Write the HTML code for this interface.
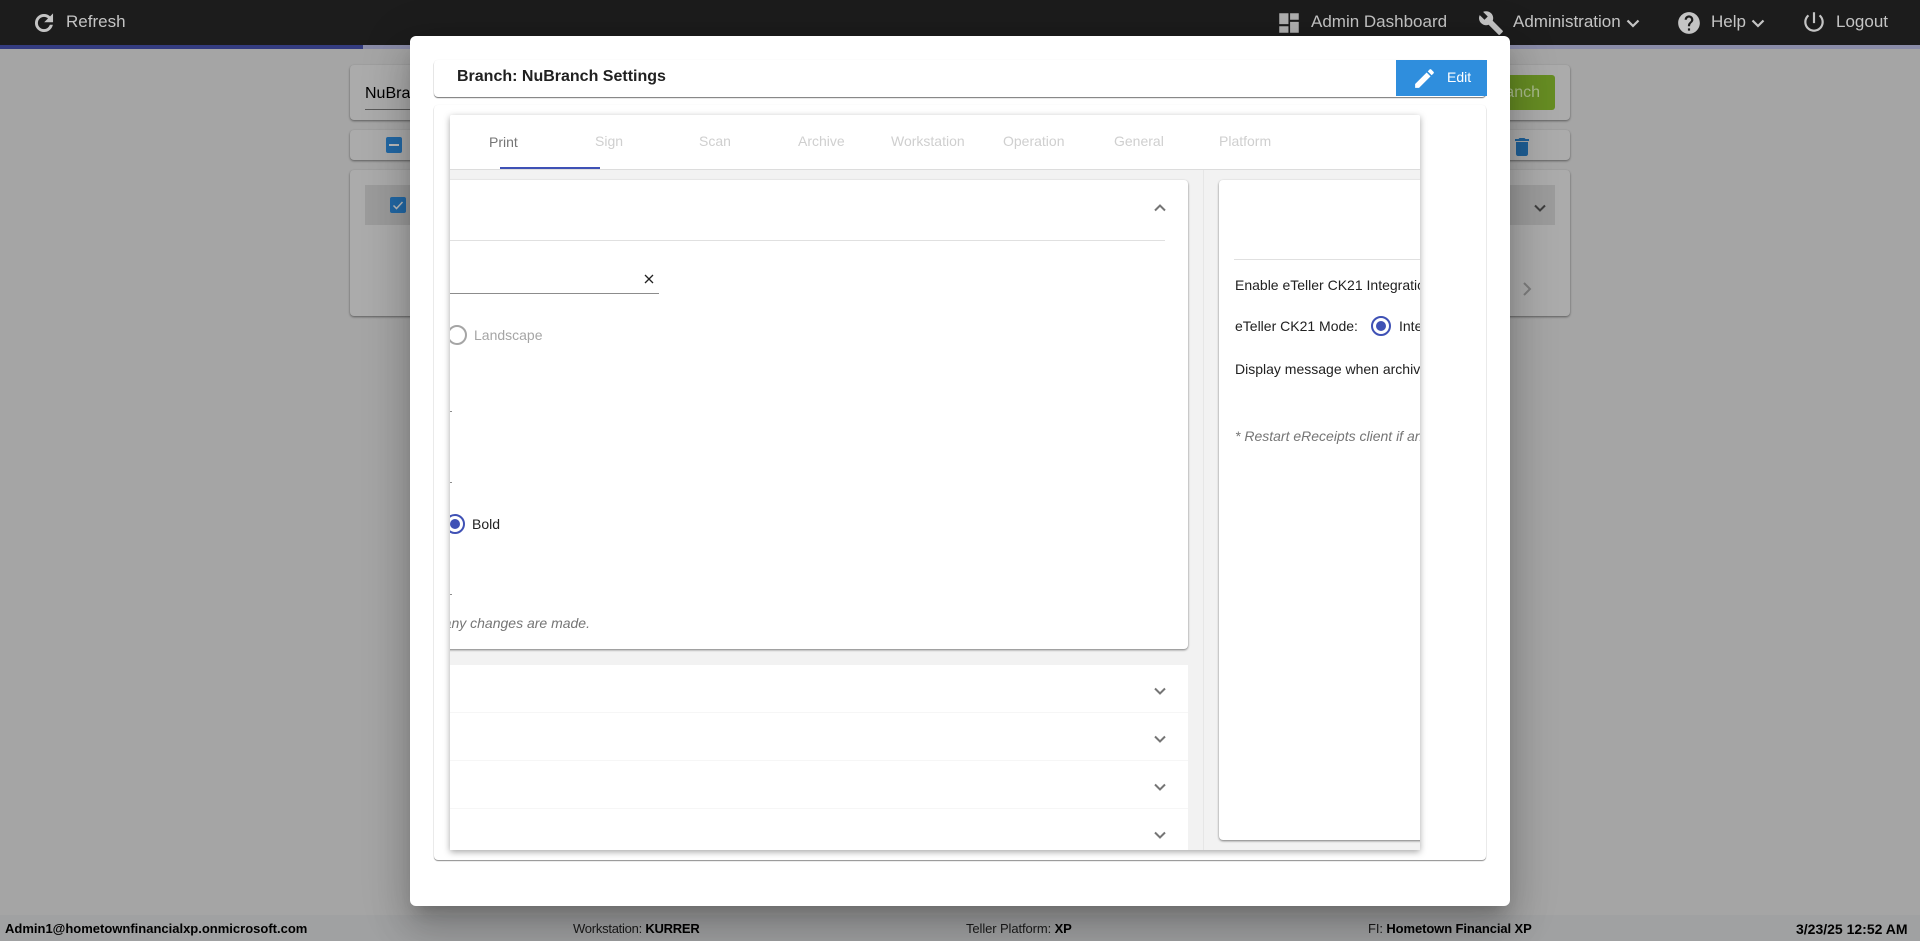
<!DOCTYPE html>
<html><head><meta charset="utf-8"><title>Branch Settings</title>
<style>
*{box-sizing:border-box}
html,body{margin:0;padding:0;width:1920px;height:941px;overflow:hidden;background:#a5a5a5;font-family:"Liberation Sans",Arial,sans-serif}
.a{position:absolute}
.t{position:absolute;white-space:nowrap;line-height:20px}
svg{position:absolute;display:block}
.nav{color:#c4c4c4;font-size:17px;top:12px}
.bgc{position:absolute;background:#ababab;border-radius:4px;box-shadow:0 1px 2px rgba(0,0,0,.45)}
.tab{font-size:14px;color:#cfcfcf;top:16px}
.f{font-size:13px;top:919px;color:#1a1a1a}
.f b{color:#000}
.r{position:absolute;border-radius:50%}
</style></head><body>

<div class="a" style="left:0;top:0;width:1920px;height:45px;background:#1c1c1c"></div>
<div class="a" style="left:0;top:45px;width:1920px;height:4px;background:#8a8ca8"></div>
<div class="a" style="left:0;top:45px;width:363px;height:4px;background:#343c80"></div>

<svg style="left:31px;top:10px" width="26" height="26" viewBox="0 0 24 24" fill="#c4c4c4" stroke="#c4c4c4" stroke-width=".7"><path d="M17.65 6.35A7.958 7.958 0 0 0 12 4c-4.42 0-7.99 3.58-7.99 8s3.57 8 7.99 8c3.73 0 6.84-2.55 7.73-6h-2.08A5.99 5.99 0 0 1 12 18c-3.31 0-6-2.69-6-6s2.69-6 6-6c1.66 0 3.14.69 4.22 1.78L13 11h7V4l-2.35 2.35z"/></svg>
<div class="t nav" style="left:66px">Refresh</div>

<svg style="left:1276px;top:10px" width="26" height="26" viewBox="0 0 24 24" fill="#b0b0b0"><path d="M3 13h8.500V3H3v10zm0 8h8.500v-6H3v6zm10 0h8V11h-8v10zm0-18v6h8V3h-8z"/></svg>
<div class="t nav" style="left:1311px">Admin Dashboard</div>
<svg style="left:1478px;top:10px" width="26" height="26" viewBox="0 0 24 24" fill="#c4c4c4"><path d="M22.7 19l-9.1-9.1c.9-2.3.4-5-1.5-6.9-2-2-5-2.4-7.4-1.3L9 6 6 9 1.6 4.7C.4 7.1.9 10.1 2.9 12.1c1.9 1.9 4.6 2.4 6.9 1.5l9.1 9.1c.4.4 1 .4 1.4 0l2.3-2.3c.5-.4.5-1.1.1-1.4z"/></svg>
<div class="t nav" style="left:1513px">Administration</div>
<svg style="left:1626px;top:16px" width="14" height="14" viewBox="0 0 14 14" fill="none" stroke="#c4c4c4" stroke-width="2.2"><path d="M1.5 4.5L7 10l5.500-5.500"/></svg>
<svg style="left:1676px;top:10px" width="26" height="26" viewBox="0 0 24 24" fill="#c4c4c4"><path d="M12 2C6.48 2 2 6.48 2 12s4.48 10 10 10 10-4.480 10-10S17.520 2 12 2zm1 17h-2v-2h2v2zm2.070-7.750l-.9.920C13.450 12.900 13 13.500 13 15h-2v-.5c0-1.100.45-2.100 1.170-2.830l1.240-1.260c.37-.36.59-.86.59-1.410 0-1.100-.9-2-2-2s-2 .9-2 2H8c0-2.210 1.790-4 4-4s4 1.790 4 4c0 .88-.36 1.680-.93 2.250z"/></svg>
<div class="t nav" style="left:1711px">Help</div>
<svg style="left:1751px;top:16px" width="14" height="14" viewBox="0 0 14 14" fill="none" stroke="#c4c4c4" stroke-width="2.2"><path d="M1.5 4.5L7 10l5.500-5.500"/></svg>
<svg style="left:1801px;top:9px" width="26" height="26" viewBox="0 0 24 24" fill="#c4c4c4"><path d="M13 3h-2v10h2V3zm4.830 2.170l-1.420 1.420C17.990 7.860 19 9.810 19 12c0 3.870-3.130 7-7 7s-7-3.130-7-7c0-2.190 1.010-4.140 2.580-5.420L6.170 5.170C4.230 6.820 3 9.260 3 12c0 4.970 4.030 9 9 9s9-4.030 9-9c0-2.740-1.230-5.180-3.170-6.830z"/></svg>
<div class="t nav" style="left:1836px">Logout</div>

<!-- background page cards -->
<div class="bgc" style="left:350px;top:65px;width:1220px;height:55px"></div>
<div class="t" style="left:365px;top:84px;font-size:16px;color:#000">NuBranch</div>
<div class="a" style="left:365px;top:109px;width:100px;height:1px;background:#5a5a5a"></div>
<div class="a" style="left:1440px;top:75px;width:115px;height:35px;background:#668c23;border-radius:3px"></div>
<div class="t" style="left:1462px;top:83px;font-size:16px;color:#a9bb8c;width:78px;text-align:right">Branch</div>
<div class="bgc" style="left:350px;top:130px;width:1220px;height:30px"></div>
<div class="a" style="left:386px;top:137px;width:16px;height:16px;background:#2268a5;border-radius:2px"></div>
<div class="a" style="left:389px;top:144px;width:10px;height:2px;background:#bcbcbc"></div>
<svg style="left:1510px;top:134px" width="24" height="26" viewBox="0 0 24 24" fill="#1f5f96"><path d="M6 19c0 1.100.9 2 2 2h8c1.100 0 2-.9 2-2V7H6v12zM19 4h-3.500l-1-1h-5l-1 1H5v2h14V4z"/></svg>
<div class="bgc" style="left:350px;top:170px;width:1220px;height:146px"></div>
<div class="a" style="left:365px;top:185px;width:1190px;height:40px;background:#9b9b9b"></div>
<div class="a" style="left:390px;top:197px;width:16px;height:16px;background:#2268a5;border-radius:2px"></div>
<svg style="left:390px;top:197px" width="16" height="16" viewBox="0 0 16 16" fill="none" stroke="#bcbcbc" stroke-width="1.500"><path d="M3.500 8.500l3 3 6-6.500"/></svg>
<svg style="left:1533px;top:201px" width="14" height="14" viewBox="0 0 14 14" fill="none" stroke="#3e3e3e" stroke-width="2"><path d="M2 4.500L7 9.500l5-5"/></svg>
<svg style="left:1520px;top:281px" width="14" height="16" viewBox="0 0 14 16" fill="none" stroke="#7d7d7d" stroke-width="2"><path d="M4 2l6 6-6 6"/></svg>

<!-- footer -->
<div class="a" style="left:0;top:915px;width:1920px;height:26px;background:#a0a1a2"></div>
<div class="t f" style="left:5px"><b>Admin1@hometownfinancialxp.onmicrosoft.com</b></div>
<div class="t f" style="left:573px;letter-spacing:-.25px">Workstation: <b>KURRER</b></div>
<div class="t f" style="left:966px;letter-spacing:-.1px">Teller Platform: <b>XP</b></div>
<div class="t f" style="left:1368px;letter-spacing:-.1px">FI: <b>Hometown Financial XP</b></div>
<div class="t f" style="left:1796px;font-size:14px"><b>3/23/25 12:52 AM</b></div>

<!-- modal -->
<div class="a" style="left:410px;top:36px;width:1100px;height:870px;background:#fff;border-radius:6px;box-shadow:0 11px 15px -7px rgba(0,0,0,.2),0 24px 38px 3px rgba(0,0,0,.14),0 9px 46px 8px rgba(0,0,0,.12)"></div>

<div class="a" style="left:434px;top:60px;width:1052px;height:37px;background:#fff;border-radius:4px;box-shadow:0 1px 1px rgba(0,0,0,.55),0 0 1px rgba(0,0,0,.08)"></div>
<div class="t" style="left:457px;top:67px;font-size:16px;font-weight:bold;color:#212121">Branch: NuBranch Settings</div>
<div class="a" style="left:1396px;top:60px;width:91px;height:36px;background:#2f8edd"></div>
<svg style="left:1412px;top:66px" width="25" height="25" viewBox="0 0 24 24" fill="#fff"><path d="M3 17.250V21h3.750L17.810 9.940l-3.750-3.750L3 17.250zM20.710 7.040c.39-.39.39-1.020 0-1.410l-2.340-2.340c-.39-.39-1.020-.39-1.410 0l-1.830 1.830 3.750 3.750 1.830-1.830z"/></svg>
<div class="t" style="left:1447px;top:67px;font-size:14px;color:#fff">Edit</div>

<div class="a" style="left:434px;top:105px;width:1052px;height:755px;background:#fff;border-radius:4px;box-shadow:0 1px 1px rgba(0,0,0,.45),0 0 1px rgba(0,0,0,.08)"></div>

<!-- inner tabs card -->
<div class="a" style="left:450px;top:115px;width:970px;height:735px;box-shadow:0 2px 7px rgba(0,0,0,.35);border-radius:2px 2px 0 0"></div>
<div class="a" style="left:450px;top:115px;width:970px;height:735px;overflow:hidden;background:#fff;border-radius:2px 2px 0 0">
  <div class="t" style="left:39px;top:17px;font-size:14px;color:#757575">Print</div>
  <div class="t tab" style="left:145px">Sign</div>
  <div class="t tab" style="left:249px">Scan</div>
  <div class="t tab" style="left:348px">Archive</div>
  <div class="t tab" style="left:441px">Workstation</div>
  <div class="t tab" style="left:553px">Operation</div>
  <div class="t tab" style="left:664px">General</div>
  <div class="t tab" style="left:769px">Platform</div>
  <div class="a" style="left:50px;top:52px;width:100px;height:2px;background:#3f51b5"></div>
  <div class="a" style="left:0;top:54px;width:970px;height:1px;background:#dcdcdc"></div>
  <div class="a" style="left:0;top:55px;width:970px;height:680px;background:#f2f2f2"></div>
  <div class="a" style="left:753px;top:55px;width:1px;height:680px;background:#e6e6e6"></div>

  <div class="a" style="left:-10px;top:65px;width:748px;height:469px;background:#fff;border-radius:4px;box-shadow:0 1px 2px rgba(0,0,0,.5)"></div>
  <div class="a" style="left:0;top:125px;width:715px;height:1px;background:#e0e0e0"></div>
  <svg style="left:703px;top:86px" width="14" height="14" viewBox="0 0 14 14" fill="none" stroke="#757575" stroke-width="2"><path d="M2 9.500L7 4.500l5 5"/></svg>
  <div class="a" style="left:0;top:178px;width:209px;height:1px;background:#8c8c8c"></div>
  <svg style="left:194px;top:159px" width="10" height="10" viewBox="0 0 10 10" fill="none" stroke="#222" stroke-width="1.300"><path d="M1 1l8 8M9 1l-8 8"/></svg>
  <div class="r" style="left:-3px;top:210px;width:20px;height:20px;border:2px solid #a5a5a5"></div>
  <div class="t" style="left:24px;top:210px;font-size:14px;color:#a5a5a5">Landscape</div>
  <div class="a" style="left:0;top:296px;width:2px;height:1px;background:#8c8c8c"></div>
  <div class="a" style="left:0;top:367px;width:2px;height:1px;background:#8c8c8c"></div>
  <div class="a" style="left:0;top:479px;width:2px;height:1px;background:#8c8c8c"></div>
  <div class="r" style="left:-5px;top:399px;width:20px;height:20px;border:2px solid #3f51b5"></div>
  <div class="r" style="left:0;top:404px;width:10px;height:10px;background:#3f51b5"></div>
  <div class="t" style="left:22px;top:399px;font-size:14px;color:#212121">Bold</div>
  <div class="t" style="left:-60px;width:200px;text-align:right;top:498px;font-size:14px;font-style:italic;color:#757575">if any changes are made.</div>

  <div class="a" style="left:-10px;top:550px;width:748px;height:185px;background:#fff"></div>
  <div class="a" style="left:0;top:597px;width:738px;height:1px;background:#f6f6f6"></div>
  <div class="a" style="left:0;top:645px;width:738px;height:1px;background:#f6f6f6"></div>
  <div class="a" style="left:0;top:693px;width:738px;height:1px;background:#f6f6f6"></div>
  <svg style="left:703px;top:569px" width="14" height="14" viewBox="0 0 14 14" fill="none" stroke="#757575" stroke-width="2"><path d="M2 4.500L7 9.500l5-5"/></svg>
  <svg style="left:703px;top:617px" width="14" height="14" viewBox="0 0 14 14" fill="none" stroke="#757575" stroke-width="2"><path d="M2 4.500L7 9.500l5-5"/></svg>
  <svg style="left:703px;top:665px" width="14" height="14" viewBox="0 0 14 14" fill="none" stroke="#757575" stroke-width="2"><path d="M2 4.500L7 9.500l5-5"/></svg>
  <svg style="left:703px;top:713px" width="14" height="14" viewBox="0 0 14 14" fill="none" stroke="#757575" stroke-width="2"><path d="M2 4.500L7 9.500l5-5"/></svg>

  <div class="a" style="left:769px;top:65px;width:220px;height:660px;background:#fff;border-radius:4px;box-shadow:0 1px 2px rgba(0,0,0,.5)"></div>
  <div class="a" style="left:784px;top:144px;width:200px;height:1px;background:#e0e0e0"></div>
  <div class="t" style="left:785px;top:160px;font-size:14px;color:#212121">Enable eTeller CK21 Integration</div>
  <div class="t" style="left:785px;top:201px;font-size:14px;color:#212121">eTeller CK21 Mode:</div>
  <div class="r" style="left:921px;top:201px;width:20px;height:20px;border:2px solid #3f51b5"></div>
  <div class="r" style="left:926px;top:206px;width:10px;height:10px;background:#3f51b5"></div>
  <div class="t" style="left:949px;top:201px;font-size:14px;color:#212121">Integrated</div>
  <div class="t" style="left:785px;top:244px;font-size:14px;color:#212121">Display message when archiving</div>
  <div class="t" style="left:785px;top:311px;font-size:14px;font-style:italic;color:#757575">* Restart eReceipts client if any changes are made.</div>
</div>
</body></html>
